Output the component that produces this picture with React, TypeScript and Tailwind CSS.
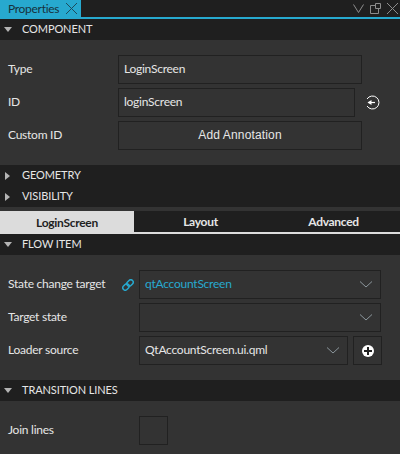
import { ReactNode } from 'react';

const font = { fontFamily: 'Lato, sans-serif' };

function SectionHeader({ title, open = true }: { title: string; open?: boolean }) {
  return (
    <div className="flex items-center h-[21px] bg-[#1f1f1f] text-[#e6e6e6] text-[11px] tracking-[-0.1px]">
      <div className="w-[22px] flex justify-center pr-[7px]">
        {open ? (
          <svg width="8" height="5" viewBox="0 0 8 5"><polygon points="0,0 8,0 4,5" fill="#b4b4b4" /></svg>
        ) : (
          <svg width="5" height="8" viewBox="0 0 5 8"><polygon points="0,0 5,4 0,8" fill="#b4b4b4" /></svg>
        )}
      </div>
      <span className="pb-[1px]">{title}</span>
    </div>
  );
}

function Chevron() {
  return (
    <svg width="12" height="7" viewBox="0 0 12 7" fill="none">
      <path d="M0 0.5 L6 6 L12 0.5" stroke="#8b969c" strokeWidth="1" />
    </svg>
  );
}

function Field({ children, className }: { children?: ReactNode; className: string }) {
  return (
    <div className={`h-[29px] border border-[#212121] flex items-center px-[5px] text-[12px] tracking-[-0.25px] ${className}`}>
      {children}
    </div>
  );
}

function Combo({ text, className, color }: { text?: string; className: string; color: string }) {
  return (
    <Field className={`justify-between pr-[8px] ${className}`}>
      <span className={`pb-[2px] ${color}`}>{text}</span>
      <Chevron />
    </Field>
  );
}

function Label({ children, className = 'w-[110px]' }: { children: ReactNode; className?: string }) {
  return <span className={`text-[12px] tracking-[-0.25px] pb-[2px] text-[#e6e6e6] ${className}`}>{children}</span>;
}

export default function App() {
  return (
    <div className="w-[400px] h-[454px] bg-[#333333] overflow-hidden text-[#e6e6e6]" style={font}>
      {/* title bar */}
      <div className="flex justify-between h-[17px] bg-[#1f1f1f]">
        <div className="w-[81px] bg-[#27a9cf] flex items-center pl-[8px] text-[12px] tracking-[-0.3px] text-[#17323c]">
          <span className="w-[58px]">Properties</span>
          <svg width="11" height="11" viewBox="0 0 11 11" stroke="#1d4c5c" fill="none">
            <path d="M0 0 L11 11 M11 0 L0 11" />
          </svg>
        </div>
        <div className="flex items-center gap-[6px] pr-[2px]">
          <svg width="11" height="9" viewBox="0 0 11 9" fill="none" stroke="#8c8c8c"><path d="M0.5 0.5 L5.5 8.5 L10.5 0.5" /></svg>
          <svg width="11" height="11" viewBox="0 0 11 11" fill="none" stroke="#8c8c8c"><path d="M5.5 2.5 H0.5 V10.5 H8.5 V5.5 M5.5 0.5 H10.5 V5.5 H5.5 Z" /></svg>
          <svg width="11" height="11" viewBox="0 0 11 11" fill="none" stroke="#8c8c8c"><path d="M0 0 L11 11 M11 0 L0 11" /></svg>
        </div>
      </div>
      <div className="h-[2px] bg-[#27a9cf]" />

      <SectionHeader title="COMPONENT" />
      <div className="h-[125px] pt-[15px] pl-[8px] flex flex-col gap-[4px]">
        <div className="flex items-center">
          <Label>Type</Label>
          <Field className="w-[244px] text-[#e6e6e6]"><span className="pb-[2px]">LoginScreen</span></Field>
        </div>
        <div className="flex items-center">
          <Label>ID</Label>
          <Field className="w-[237px] text-[#e6e6e6]"><span className="pb-[2px]">loginScreen</span></Field>
          <svg className="ml-[10px]" width="15" height="15" viewBox="0 0 15 15" fill="none">
            <path d="M2 4 A6.5 6.5 0 1 1 2 11" stroke="#ffffff" strokeWidth="1" />
            <path d="M3.5 7.5 L10 7.5" stroke="#ffffff" strokeWidth="1.2" />
            <polygon points="2.5,7.5 6.5,5 6.5,10" fill="#ffffff" />
          </svg>
        </div>
        <div className="flex items-center">
          <Label>Custom ID</Label>
          <Field className="w-[244px] justify-center">
            <span className="text-[12px] tracking-[0.15px] pb-[1px]" style={{ fontFamily: '"Liberation Sans", sans-serif' }}>Add Annotation</span>
          </Field>
        </div>
      </div>

      <SectionHeader title="GEOMETRY" open={false} />
      <SectionHeader title="VISIBILITY" open={false} />

      {/* tabs */}
      <div className="mt-[4px] flex h-[23px] bg-[#1f1f1f] border-b-2 border-[#dcdcdc] text-[12px] font-bold tracking-[-0.3px]">
        <div className="w-[134px] h-[23px] bg-[#dcdcdc] text-[#1f1f1f] flex items-center justify-center">LoginScreen</div>
        <div className="w-[133px] flex items-center justify-center">Layout</div>
        <div className="w-[133px] flex items-center justify-center">Advanced</div>
      </div>

      <SectionHeader title="FLOW ITEM" />
      <div className="h-[125px] pt-[15px] pl-[8px] flex flex-col gap-[4px]">
        <div className="flex items-center">
          <Label className="w-[114px]">State change target</Label>
          <svg width="12" height="12" viewBox="0 0 12 12" fill="none" stroke="#27a9cf" strokeWidth="1.5">
            <rect x="0.5" y="5.6" width="7" height="4.8" rx="2.4" transform="rotate(-45 4 8)" />
            <rect x="4.5" y="1.6" width="7" height="4.8" rx="2.4" transform="rotate(-45 8 4)" />
          </svg>
          <Combo text="qtAccountScreen" color="text-[#27a9cf]" className="w-[242px] ml-[5px]" />
        </div>
        <div className="flex items-center">
          <Label className="w-[131px]">Target state</Label>
          <Combo color="text-[#e6e6e6]" className="w-[242px]" />
        </div>
        <div className="flex items-center">
          <Label className="w-[131px]">Loader source</Label>
          <Combo text="QtAccountScreen.ui.qml" color="text-[#e6e6e6]" className="w-[209px]" />
          <Field className="w-[29px] ml-[5px] justify-center px-0">
            <svg width="12" height="12" viewBox="0 0 12 12">
              <circle cx="6" cy="6" r="6" fill="#ffffff" />
              <path d="M6 2 V10 M2 6 H10" stroke="#222222" strokeWidth="2" />
            </svg>
          </Field>
        </div>
      </div>

      <SectionHeader title="TRANSITION LINES" />
      <div className="pt-[15px] pl-[8px] flex items-center">
        <Label className="w-[131px]">Join lines</Label>
        <div className="w-[29px] h-[29px] border border-[#212121]" />
      </div>
    </div>
  );
}
